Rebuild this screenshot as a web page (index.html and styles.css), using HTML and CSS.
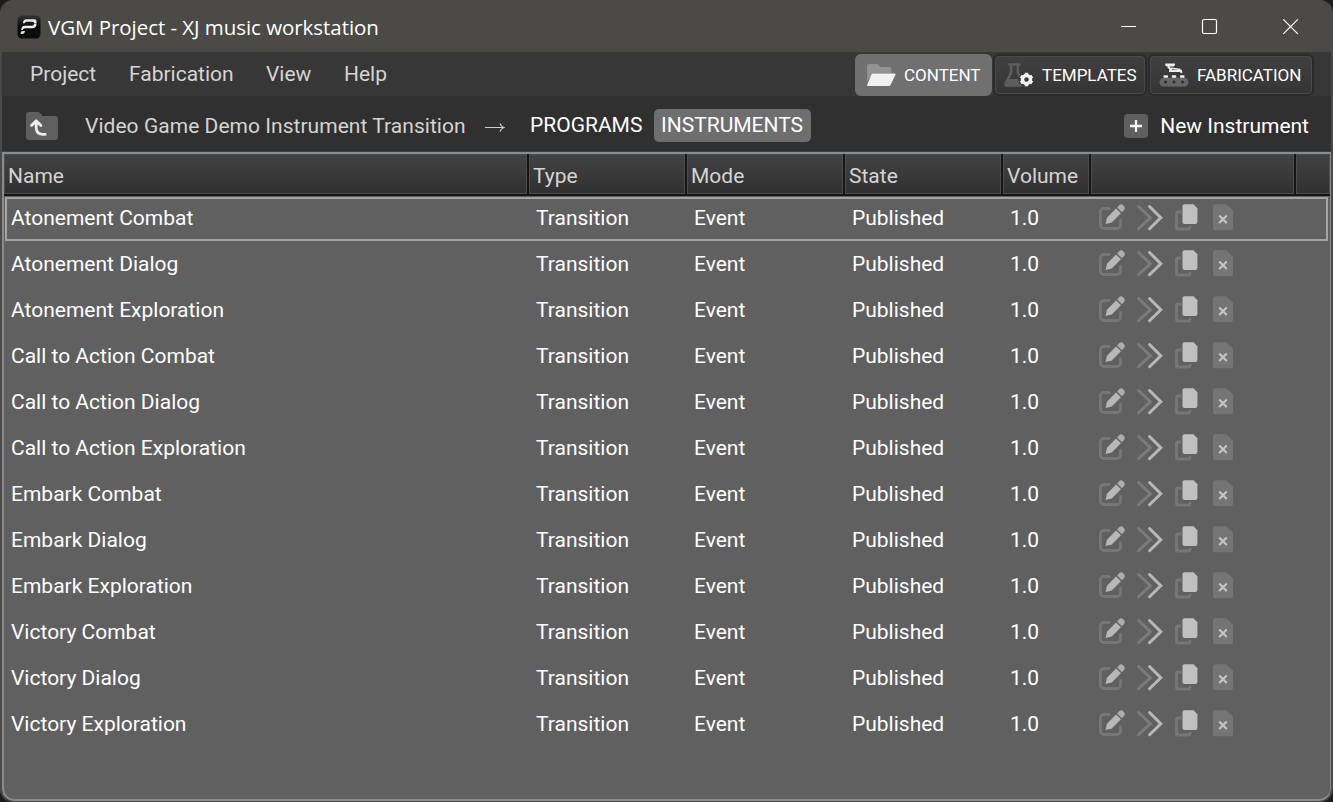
FILE: index.html
```html
<!DOCTYPE html>
<html lang="en">
<head>
<meta charset="utf-8">
<title>VGM Project - XJ music workstation</title>
<link rel="stylesheet" href="styles.css">
</head>
<body>
<svg class="sprite" aria-hidden="true">
  <symbol id="actions" viewBox="0 0 145 36">
    <path d="M14 8.500H9a3.500 3.500 0 0 0-3.500 3.500v13a3.500 3.500 0 0 0 3.500 3.500h13a3.500 3.500 0 0 0 3.500-3.500v-4.500" fill="none" stroke="#777" stroke-width="2.800" stroke-linecap="round"/>
    <path d="M10.500 24l1.500-6.200 9-9.200 4.900 4.700-9.100 9.100z" fill="#b8b8b8"/>
    <path d="M22.100 7.500l2-2.200a2.800 2.800 0 0 1 4 0l1 1a2.800 2.800 0 0 1 0 3.700l-2.200 2.200z" fill="#aeaeae"/>
    <path d="M43.500 6.500l12 11.200-12 11" fill="none" stroke="#7b7b7b" stroke-width="3" stroke-linecap="round"/>
    <path d="M54.500 6.500l11.300 11.200-11.300 11" fill="none" stroke="#b8b8b8" stroke-width="3" stroke-linecap="round"/>
    <path d="M86.500 12H83a1.500 1.500 0 0 0-1.500 1.500v14A1.500 1.500 0 0 0 83 29h10.500a1.500 1.500 0 0 0 1.500-1.500V26" fill="none" stroke="#777" stroke-width="2.800"/>
    <path d="M89.500 4.200h9l3.900 4v13.800a2 2 0 0 1-2 2H89.500a2 2 0 0 1-2-2V6.200a2 2 0 0 1 2-2z" fill="#c0c0c0"/>
    <path d="M120.500 4.200h10.800l6.700 6.600v17a2.500 2.500 0 0 1-2.500 2.500h-15a2.500 2.500 0 0 1-2.500-2.500v-21a2.500 2.500 0 0 1 2.500-2.600z" fill="#757575"/>
    <path d="M125 16.300l6 6m0-6l-6 6" stroke="#c4c4c4" stroke-width="2.200" stroke-linecap="square"/>
  </symbol>
</svg>
<div class="window">
  <header class="titlebar">
    <svg class="app-icon" viewBox="0 0 24 24"><defs><linearGradient id="ag" x2="0" y2="1"><stop stop-color="#343434"/><stop offset=".5" stop-color="#0c0c0c"/></linearGradient></defs><rect x=".5" y=".5" width="23" height="23" rx="4.500" fill="url(#ag)"/><path d="M6 7.200Q6.500 4.200 9.500 4.200h8q2 0 2 2v2h-2.300q0-1.500-1.500-1.500H9.500Q8 6.700 7.700 8.300H6z" fill="#e8e8e8"/><path d="M19.500 8.500q0 4.700-4.500 4.700H8q-2 0-2.300 1.800H4.200q0-4.300 3.800-4.300h7q2 0 2.200-2.200z" fill="#f0f0f0"/><path d="M3.700 19v-1.500q0-1.500 1.800-1.500H8q-.3 3-2.800 3z" fill="#ddd"/></svg>
    <span class="title">VGM Project - XJ music workstation</span>
    <svg class="controls" viewBox="0 0 200 30" fill="none" stroke="#fff" stroke-width="1.200"><path d="M21 13.500h15" stroke-width="1"/><rect x="102.500" y="6.500" width="14" height="14" rx="1.500"/><path d="M183.300 6.300l14.500 14.500m0-14.500l-14.500 14.500"/></svg>
  </header>

  <div class="menubar">
    <nav class="menu"><span class="m-project">Project</span><span class="m-fab">Fabrication</span><span class="m-view">View</span><span class="m-help">Help</span></nav>
    <div class="modes">
      <button class="mode active w-content"><svg viewBox="0 0 30 24"><path d="M1 19V3a2 2 0 0 1 2-2h8l4 3h8a2.500 2.500 0 0 1 2.500 2.500V10H7z" fill="#929292"/><path d="M6.500 10.500h22q1.500 0 1 1.200L24.500 22q-.5 1-1.600 1H2Q.6 23 1.200 21.800L5.500 11.500z" fill="#f2f2f2"/></svg><span>CONTENT</span></button>
      <button class="mode w-templates"><svg viewBox="0 0 30 24"><path d="M5.500 1.500h10M7.200 2v7.500L1.800 20q-1 2.500 1.500 2.500H17M13.800 2v8l2 3.500" fill="none" stroke="#5e5e5e" stroke-width="2.400" stroke-linecap="round"/><path d="M5 16h9l2 6H2z" fill="#5e5e5e"/><circle cx="22.500" cy="16.500" r="7.800" fill="#3a3a3a"/><circle cx="22.500" cy="16.500" r="4" fill="none" stroke="#f2f2f2" stroke-width="3.400"/><path d="M22.500 9.800v2.500M22.500 20.700v2.500M16.700 13.200l2 1.200M26.300 18.600l2 1.200M16.700 19.800l2-1.200M26.300 14.400l2-1.200" stroke="#f2f2f2" stroke-width="3.400"/></svg><span>TEMPLATES</span></button>
      <button class="mode w-fabrication"><svg viewBox="0 0 30 24"><rect x=".5" y="14.800" width="29" height="8.700" rx="4.350" fill="#666"/><g fill="#2c2c2c"><circle cx="6.500" cy="19" r="1.500"/><circle cx="15" cy="19" r="1.500"/><circle cx="23.500" cy="19" r="1.500"/></g><g fill="#f0f0f0"><rect x="4.500" y="12.300" width="4.500" height="2.500" rx=".8"/><rect x="12.800" y="12.300" width="4.500" height="2.500" rx=".8"/><rect x="21" y="12.300" width="4.500" height="2.500" rx=".8"/></g><path d="M6.300.5H16v1.600l-1.500 1.400H8L6.300 2.400z" fill="#eee"/><path d="M9 3.500l3.500 3.800" stroke="#eee" stroke-width="2"/><path d="M10 8h9l3-.2.5 2.200" fill="none" stroke="#eee" stroke-width="2"/><path d="M12 5.200l9.500 1.300" stroke="#eee" stroke-width="1.600"/></svg><span>FABRICATION</span></button>
    </div>
  </div>

  <div class="toolbar">
    <svg class="up" viewBox="0 0 32 28"><path d="M3 0h9q1.200 0 2 .9L16.500 4H29a3 3 0 0 1 3 3v18a3 3 0 0 1-3 3H3a3 3 0 0 1-3-3V3a3 3 0 0 1 3-3z" fill="#5f5f5f"/><path d="M5.500 13.500l4.700-4.700 4.700 4.700M10.200 9.500v6.200q.2 6.300 6.300 6.600h2.700" fill="none" stroke="#f0f0f0" stroke-width="2.800" stroke-linecap="round" stroke-linejoin="round"/></svg>
    <span class="crumb">Video Game Demo Instrument Transition</span>
    <svg class="arrow" viewBox="0 0 20 10"><path d="M0 5.500h19M15 1.500q1 3 4 4q-3 1-4 4" fill="none" stroke="#ccc" stroke-width="1.200"/></svg>
    <span class="tab programs">PROGRAMS</span>
    <span class="tab instruments">INSTRUMENTS</span>
    <div class="new"><svg viewBox="0 0 24 24"><rect width="24" height="24" rx="3.500" fill="#5f5f5f"/><path d="M12 6v12M6 12h12" stroke="#f4f4f4" stroke-width="2.300"/></svg><span>New Instrument</span></div>
  </div>

  <main class="table">
    <div class="grid head"><span>Name</span><span>Type</span><span>Mode</span><span>State</span><span>Volume</span><span></span><span></span></div>
    <div class="grid row selected"><span>Atonement Combat</span><span>Transition</span><span>Event</span><span>Published</span><span>1.0</span><svg><use href="#actions"/></svg></div>
    <div class="grid row"><span>Atonement Dialog</span><span>Transition</span><span>Event</span><span>Published</span><span>1.0</span><svg><use href="#actions"/></svg></div>
    <div class="grid row"><span>Atonement Exploration</span><span>Transition</span><span>Event</span><span>Published</span><span>1.0</span><svg><use href="#actions"/></svg></div>
    <div class="grid row"><span>Call to Action Combat</span><span>Transition</span><span>Event</span><span>Published</span><span>1.0</span><svg><use href="#actions"/></svg></div>
    <div class="grid row"><span>Call to Action Dialog</span><span>Transition</span><span>Event</span><span>Published</span><span>1.0</span><svg><use href="#actions"/></svg></div>
    <div class="grid row"><span>Call to Action Exploration</span><span>Transition</span><span>Event</span><span>Published</span><span>1.0</span><svg><use href="#actions"/></svg></div>
    <div class="grid row"><span>Embark Combat</span><span>Transition</span><span>Event</span><span>Published</span><span>1.0</span><svg><use href="#actions"/></svg></div>
    <div class="grid row"><span>Embark Dialog</span><span>Transition</span><span>Event</span><span>Published</span><span>1.0</span><svg><use href="#actions"/></svg></div>
    <div class="grid row"><span>Embark Exploration</span><span>Transition</span><span>Event</span><span>Published</span><span>1.0</span><svg><use href="#actions"/></svg></div>
    <div class="grid row"><span>Victory Combat</span><span>Transition</span><span>Event</span><span>Published</span><span>1.0</span><svg><use href="#actions"/></svg></div>
    <div class="grid row"><span>Victory Dialog</span><span>Transition</span><span>Event</span><span>Published</span><span>1.0</span><svg><use href="#actions"/></svg></div>
    <div class="grid row"><span>Victory Exploration</span><span>Transition</span><span>Event</span><span>Published</span><span>1.0</span><svg><use href="#actions"/></svg></div>
  </main>
</div>
</body>
</html>
```

FILE: styles.css
```css
* { box-sizing: border-box; }
body { margin: 0; background: #1c1c1c; font-family: Roboto, sans-serif; font-size: 21px; letter-spacing: 0; color: #fff; white-space: nowrap; }
.sprite { display: none; }
svg { flex: none; display: block; }
.window { width: 1333px; height: 802px; border: 2px solid #4b4a48; border-width: 0 2px 1px; border-radius: 13px; overflow: hidden; background: #303030; display: flex; flex-direction: column; }

.titlebar { height: 52px; flex: none; background: #4b4a47; display: flex; align-items: center; padding-left: 15px; }
.app-icon { width: 24px; height: 24px; margin-top: 2px; }
.title { font-family: "Open Sans", "Noto Sans", sans-serif; font-size: 20.5px; letter-spacing: -0.05px; margin-left: 7px; margin-top: 2px; }
.controls { width: 200px; height: 30px; margin-left: auto; margin-right: 31px; margin-top: 4px; }

.menubar { height: 44px; flex: none; background: #373737; display: flex; justify-content: space-between; padding-left: 28px; color: #d4d4d4; }
.menu { display: flex; line-height: 44px; }
.m-project { width: 99px; }
.m-fab { width: 137px; }
.m-view { width: 78px; }
.modes { display: flex; gap: 1px; padding: 2px 17px 0 0; }
.mode { height: 42px; display: flex; align-items: center; font: 17px Roboto, sans-serif; letter-spacing: 0; color: #fff; padding: 0; border: 2px solid #2a2a2a; border-radius: 6px; background: linear-gradient(#404040, #353535); box-shadow: inset 0 0 0 1px #4a4a4a; }
.mode.active { background: #707070; border-color: #707070; box-shadow: none; }
.w-content { width: 137px; }
.w-templates { width: 154px; }
.w-fabrication { width: 166px; }
.mode svg { width: 30px; height: 24px; margin-left: 9px; }
.mode span { margin-left: 8px; }

.toolbar { height: 56px; flex: none; display: flex; align-items: center; padding: 3px 22px 0 24px; color: #d4d4d4; }
.up { width: 32px; height: 28px; margin-top: 1px; }
.crumb { width: 381px; margin-left: 27px; letter-spacing: 0.04px; }
.arrow { width: 20px; height: 10px; margin-left: 19px; margin-top: 3px; }
.tab { color: #fff; height: 33px; line-height: 32px; border-radius: 5px; margin-top: -1px; }
.programs { width: 113px; margin-left: 25px; }
.instruments { width: 157px; padding-left: 7px; margin-left: 11px; background: #6e6e6e; }
.new { margin-left: auto; color: #fff; display: flex; align-items: center; gap: 12px; }
.new svg { width: 24px; height: 24px; }

.table { flex: 1; border: 2px solid #8b8b8b; border-width: 2px 1px 2px 2px; border-radius: 0 0 12px 12px; background: #606060; box-shadow: 0 -1px 0 #31464f; }
.grid { display: grid; grid-template-columns: 525px 158px 158px 158px 88px 205px 1fr; }
.head { height: 42px; color: #d4d4d4; border-bottom: 2px solid #151515; }
.head span { padding-left: 4px; line-height: 44px; height: 40px; background: linear-gradient(#434343, #303030); border-right: 2px solid #151515; box-shadow: inset 0 0 0 1px #4d4d4d; }
.head span:last-child { border-right: 0; }
.row { height: 46px; line-height: 44px; padding-left: 7px; position: relative; }
.row svg { width: 145px; height: 36px; margin: 4px 0 0 -3px; }
.selected::after { content: ""; position: absolute; inset: 1px 2px 1px 1px; border: 2px solid #a4a4a4; }
```
